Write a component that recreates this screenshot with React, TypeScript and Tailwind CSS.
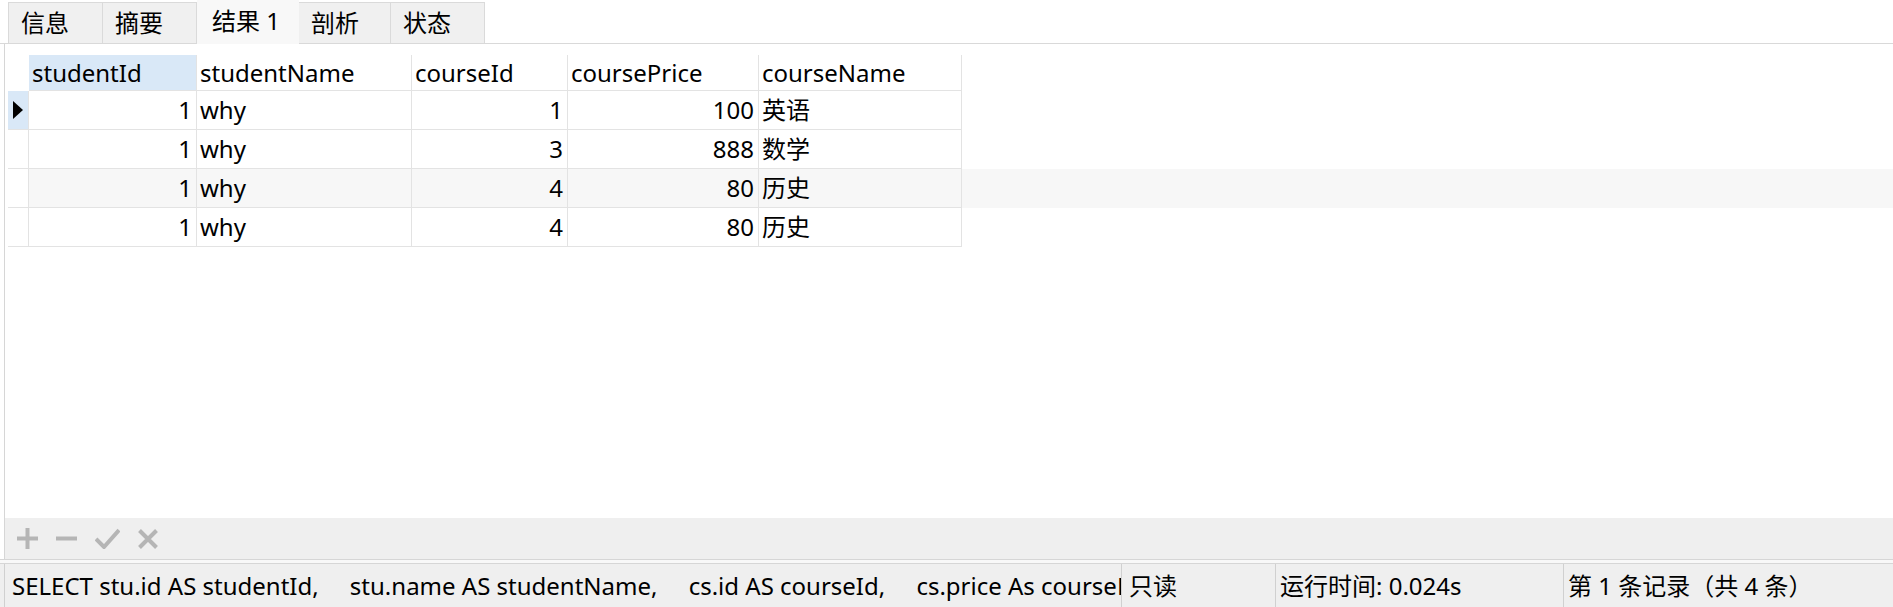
const font = "font-['Noto_Sans','Noto_Sans_CJK_SC',sans-serif]";

const tabs = [
  { label: "信息", w: "w-[95px]" },
  { label: "摘要", w: "w-[94px]" },
  { label: "结果 1", w: "w-[102px]", active: true },
  { label: "剖析", w: "w-[92px]" },
  { label: "状态", w: "w-[94px]" },
];

const columns = [
  { name: "studentId", w: "w-[168px]", right: true },
  { name: "studentName", w: "w-[215px]" },
  { name: "courseId", w: "w-[156px]", right: true },
  { name: "coursePrice", w: "w-[191px]", right: true },
  { name: "courseName", w: "w-[203px]" },
];

const rows = [
  ["1", "why", "1", "100", "英语"],
  ["1", "why", "3", "888", "数学"],
  ["1", "why", "4", "80", "历史"],
  ["1", "why", "4", "80", "历史"],
];

function Tabs() {
  return (
    <div className="flex h-[44px] items-end border-b border-[#d9d9d9] pl-[8px]">
      {tabs.map((t, i) =>
        t.active ? (
          <div
            key={t.label}
            className={`${t.w} -mb-px flex h-[45px] items-center bg-[#f8f8f8] pl-[15px] pb-[2px]`}
          >
            {t.label}
          </div>
        ) : (
          <div
            key={t.label}
            className={`${t.w} flex h-[41px] items-center border-t border-r border-[#dadada] bg-[#f0f0f0] pl-[12px] ${
              i === 0 ? "border-l" : ""
            }`}
          >
            {t.label}
          </div>
        )
      )}
    </div>
  );
}

function Grid() {
  return (
    <div className="flex flex-col">
      <div className="flex h-[36px]">
        <div className="w-[21px]" />
        {columns.map((c, i) => (
          <div
            key={c.name}
            className={`${c.w} flex items-center border-r border-b border-[#e3e3e3] pl-[3px] ${
              i === 0 ? "bg-[#d9e8f7]" : "bg-white"
            }`}
          >
            {c.name}
          </div>
        ))}
      </div>
      {rows.map((r, ri) => (
        <div key={ri} className={`flex h-[39px] ${ri === 2 ? "bg-[#f7f7f7]" : "bg-white"}`}>
          <div
            className={`flex w-[21px] items-center justify-center border-r border-b border-[#e3e3e3] ${
              ri === 0 ? "bg-[#d9e8f7]" : "bg-white"
            }`}
          >
            {ri === 0 && (
              <svg width="10" height="18" viewBox="0 0 10 18">
                <path d="M0 0 L10 9 L0 18 Z" fill="#000" />
              </svg>
            )}
          </div>
          {r.map((v, ci) => (
            <div
              key={ci}
              className={`${columns[ci].w} flex items-center border-r border-b border-[#e3e3e3] ${
                columns[ci].right ? "justify-end pr-[4px]" : "pl-[3px]"
              }`}
            >
              {v}
            </div>
          ))}
        </div>
      ))}
    </div>
  );
}

function Toolbar() {
  return (
    <div className="ml-[4px] flex h-[41px] items-center gap-[18px] border-l border-[#d6d6d6] bg-[#efefef] pl-[12px]">
      <svg width="21" height="21" viewBox="0 0 21 21" stroke="#b5b5b5" strokeWidth="4">
        <path d="M10.5 0 V21 M0 10.5 H21" />
      </svg>
      <svg width="21" height="21" viewBox="0 0 21 21" stroke="#b5b5b5" strokeWidth="4">
        <path d="M0 10.5 H21" />
      </svg>
      <svg width="25" height="21" viewBox="0 0 25 21" fill="none" stroke="#b5b5b5" strokeWidth="4">
        <path d="M1 11 L9 19 L24 2" />
      </svg>
      <svg width="20" height="20" viewBox="0 0 20 20" stroke="#b5b5b5" strokeWidth="4">
        <path d="M1.5 1.5 L18.5 18.5 M18.5 1.5 L1.5 18.5" />
      </svg>
    </div>
  );
}

function StatusBar() {
  return (
    <div className="flex h-[43px] items-center bg-[#efefef]">
      <div className="ml-[4px] flex h-full w-[1117px] items-center overflow-hidden whitespace-pre border-l border-[#d0d0d0] pl-[7px]">
        {"SELECT stu.id AS studentId,     stu.name AS studentName,     cs.id AS courseId,     cs.price As coursePrice,     cs.name AS courseName"}
      </div>
      <div className="flex h-full w-[154px] items-center border-l border-[#d0d0d0] pl-[7px]">只读</div>
      <div className="flex h-full w-[288px] items-center border-l border-[#d0d0d0] pl-[4px]">运行时间: 0.024s</div>
      <div className="flex h-full flex-1 items-center border-l border-[#d0d0d0] pl-[4px]">第 1 条记录（共 4 条）</div>
    </div>
  );
}

export default function App() {
  return (
    <div className={`${font} flex h-[607px] w-[1893px] flex-col overflow-hidden bg-white text-[24px] leading-none text-black`}>
      <Tabs />
      <div className="ml-[4px] flex-1 border-l border-[#d6d6d6] bg-white pl-[3px] pt-[11px]">
        <Grid />
      </div>
      <Toolbar />
      <div className="h-[5px] border-y border-[#d6d6d6] bg-[#f8f8f8]" />
      <StatusBar />
    </div>
  );
}
